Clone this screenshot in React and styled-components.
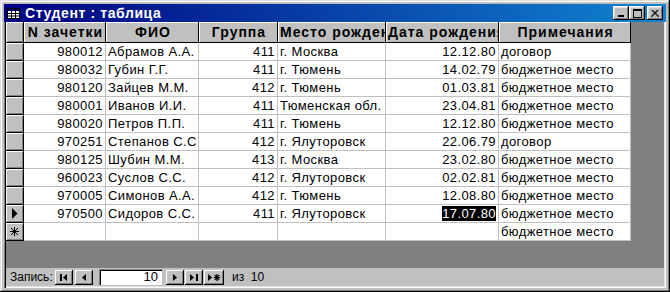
import styled, { createGlobalStyle } from 'styled-components'

const GlobalStyle = createGlobalStyle`
  html, body {
    margin: 0;
    padding: 0;
    background: #c0c0c0;
  }
  * {
    box-sizing: border-box;
  }
`

const columns = [
  { key: 'num', title: 'N зачетки', width: 82, align: 'right' },
  { key: 'fio', title: 'ФИО', width: 93, align: 'left' },
  { key: 'group', title: 'Группа', width: 79, align: 'right' },
  { key: 'place', title: 'Место рожден', width: 108, align: 'left' },
  { key: 'date', title: 'Дата рождения', width: 113, align: 'right' },
  { key: 'note', title: 'Примечания', width: 132, align: 'left' },
]

const rows = [
  ['980012', 'Абрамов А.А.', '411', 'г. Москва', '12.12.80', 'договор'],
  ['980032', 'Губин Г.Г.', '411', 'г. Тюмень', '14.02.79', 'бюджетное место'],
  ['980120', 'Зайцев М.М.', '412', 'г. Тюмень', '01.03.81', 'бюджетное место'],
  ['980001', 'Иванов И.И.', '411', 'Тюменская обл.', '23.04.81', 'бюджетное место'],
  ['980020', 'Петров П.П.', '411', 'г. Тюмень', '12.12.80', 'бюджетное место'],
  ['970251', 'Степанов С.С', '412', 'г. Ялуторовск', '22.06.79', 'договор'],
  ['980125', 'Шубин М.М.', '413', 'г. Москва', '23.02.80', 'бюджетное место'],
  ['960023', 'Суслов С.С.', '412', 'г. Ялуторовск', '02.02.81', 'бюджетное место'],
  ['970005', 'Симонов А.А.', '412', 'г. Тюмень', '12.08.80', 'бюджетное место'],
  ['970500', 'Сидоров С.С.', '411', 'г. Ялуторовск', '17.07.80', 'бюджетное место'],
]

const Window = styled.div`
  width: 670px;
  height: 292px;
  padding: 4px;
  display: flex;
  flex-direction: column;
  background: #c0c0c0;
  box-shadow: inset -1px -1px #000, inset 1px 1px #dfdfdf,
    inset -2px -2px #808080, inset 2px 2px #fff;
  font-family: 'Liberation Sans', Arial, sans-serif;
  font-size: 13px;
  color: #000;
`

const TitleBar = styled.div`
  height: 18px;
  display: flex;
  align-items: center;
  padding: 0 3px 0 3px;
  background: linear-gradient(to right, #000080, #1084d0);
  color: #fff;
  font-weight: bold;
  font-size: 14px;
  letter-spacing: 0.6px;
`

const TitleIcon = styled.svg`
  flex: none;
  margin-right: 5px;
`

const TitleText = styled.span`
  flex: 1;
  white-space: nowrap;
`

const CaptionButton = styled.button`
  width: 16px;
  height: 14px;
  padding: 0;
  margin-left: ${({ $gap }) => $gap || 0}px;
  border: none;
  background: #c0c0c0;
  box-shadow: inset -1px -1px #000, inset 1px 1px #fff,
    inset -2px -2px #808080, inset 2px 2px #dfdfdf;
  display: flex;
  align-items: center;
  justify-content: center;
`

const Client = styled.div`
  flex: 1;
  display: flex;
  flex-direction: column;
  padding: 0 2px 2px 2px;
  box-shadow: inset 1px 0 #808080, inset 2px 0 #000, inset -1px -1px #fff,
    inset -2px -2px #dfdfdf;
`

const Workspace = styled.div`
  flex: 1;
  background: #808080;
  overflow: hidden;
`

const Grid = styled.div`
  display: grid;
  grid-template-columns: 18px ${columns.map((c) => `${c.width}px`).join(' ')};
  grid-auto-rows: 18px;
  grid-template-rows: 21px;
  width: max-content;
  background: #fff;
`

const HeaderCell = styled.div`
  background: #c0c0c0;
  border-right: 1px solid #000;
  border-bottom: 1px solid #000;
  box-shadow: inset 1px 1px #fff;
  font-weight: bold;
  font-size: 14px;
  letter-spacing: 1px;
  text-align: center;
  line-height: 20px;
  white-space: nowrap;
  overflow: hidden;
  padding-left: 2px;
`

const Selector = styled.div`
  background: #c0c0c0;
  border-right: 1px solid #000;
  border-bottom: 1px solid #000;
  box-shadow: inset 1px 1px #fff, inset -1px -1px #808080;
  display: flex;
  align-items: center;
  justify-content: center;
`

const Cell = styled.div`
  border-right: 1px solid #c0c0c0;
  border-bottom: 1px solid #c0c0c0;
  text-align: ${({ $align }) => $align};
  padding: 0 2px 0 2px;
  line-height: 17px;
  white-space: nowrap;
  overflow: hidden;
  letter-spacing: 0.4px;
`

const Selected = styled.span`
  background: #000;
  color: #fff;
`

const StatusBar = styled.div`
  height: 18px;
  display: flex;
  align-items: center;
  padding-left: 4px;
  background: #c0c0c0;
  font-size: 12px;
`

const StatusLabel = styled.span`
  width: ${({ $w }) => ($w ? `${$w}px` : 'auto')};
  flex: none;
  margin-left: ${({ $gap }) => $gap || 0}px;
  white-space: pre;
`

const NavButton = styled.button`
  width: ${({ $w }) => $w || 18}px;
  height: 15px;
  padding: 0;
  margin-left: ${({ $gap }) => $gap || 0}px;
  border: none;
  background: #c0c0c0;
  box-shadow: inset -1px -1px #000, inset 1px 1px #fff,
    inset -2px -2px #808080;
  display: flex;
  align-items: center;
  justify-content: center;
`

const RecordBox = styled.div`
  width: 63px;
  height: 16px;
  margin: 0 4px 0 6px;
  background: #fff;
  box-shadow: inset 1px 1px #808080, inset 2px 2px #000, inset -1px -1px #fff;
  text-align: right;
  padding-right: 4px;
  line-height: 16px;
  font-size: 13px;
`

const First = () => (
  <svg width="8" height="7" viewBox="0 0 8 7">
    <rect x="0" y="0" width="2" height="7" fill="#000" />
    <path d="M7 0 L3 3.5 L7 7 Z" fill="#000" />
  </svg>
)

const Prev = () => (
  <svg width="5" height="7" viewBox="0 0 5 7">
    <path d="M4 0 L0 3.5 L4 7 Z" fill="#000" />
  </svg>
)

const Next = () => (
  <svg width="5" height="7" viewBox="0 0 5 7">
    <path d="M0 0 L4 3.5 L0 7 Z" fill="#000" />
  </svg>
)

const Last = () => (
  <svg width="8" height="7" viewBox="0 0 8 7">
    <path d="M0 0 L4 3.5 L0 7 Z" fill="#000" />
    <rect x="6" y="0" width="2" height="7" fill="#000" />
  </svg>
)

const NewRec = () => (
  <svg width="13" height="7" viewBox="0 0 13 7">
    <path d="M0 0 L4 3.5 L0 7 Z" fill="#000" />
    <path d="M9 0 V7 M5.8 3.5 H12.2 M6.8 1.2 L11.2 5.8 M11.2 1.2 L6.8 5.8" stroke="#000" strokeWidth="1.2" />
  </svg>
)

const Star = () => (
  <svg width="9" height="9" viewBox="0 0 9 9">
    <path d="M4.5 0 V9 M0 4.5 H9 M1 1 L8 8 M8 1 L1 8" stroke="#000" strokeWidth="1" />
  </svg>
)

const Current = () => (
  <svg width="7" height="11" viewBox="0 0 7 11">
    <path d="M1 0 L6.5 5.5 L1 11 Z" fill="#000" />
  </svg>
)

export default function App() {
  return (
    <>
      <GlobalStyle />
      <Window>
        <TitleBar>
          <TitleIcon width="13" height="11" viewBox="0 0 13 11">
            <rect x="0.5" y="0.5" width="12" height="10" fill="#fff" stroke="#000" />
            <rect x="1" y="1" width="11" height="2" fill="#000080" />
            <path d="M0.5 5.5 H12.5 M0.5 8 H12.5 M4.5 0.5 V10.5 M8.5 0.5 V10.5" stroke="#000" />
          </TitleIcon>
          <TitleText>Студент : таблица</TitleText>
          <CaptionButton>
            <svg width="8" height="8" viewBox="0 0 8 8">
              <rect x="1" y="6" width="6" height="2" fill="#000" />
            </svg>
          </CaptionButton>
          <CaptionButton>
            <svg width="9" height="9" viewBox="0 0 9 9">
              <rect x="0.5" y="0.5" width="8" height="8" fill="none" stroke="#000" />
              <rect x="0" y="0" width="9" height="2" fill="#000" />
            </svg>
          </CaptionButton>
          <CaptionButton $gap={2}>
            <svg width="8" height="7" viewBox="0 0 8 7">
              <path d="M0.5 0 L7.5 7 M7.5 0 L0.5 7 M1.5 0 L8.5 7 M6.5 0 L-0.5 7" stroke="#000" strokeWidth="1" />
            </svg>
          </CaptionButton>
        </TitleBar>
        <Client>
          <Workspace>
            <Grid>
              <Selector />
              {columns.map((c) => (
                <HeaderCell key={c.key}>{c.title}</HeaderCell>
              ))}
              {rows.map((r, i) => (
                <Row key={r[0]} data={r} current={i === rows.length - 1} />
              ))}
              <Selector>
                <Star />
              </Selector>
              {columns.map((c) => (
                <Cell key={c.key} $align={c.align}>
                  {c.key === 'note' ? 'бюджетное место' : ''}
                </Cell>
              ))}
            </Grid>
          </Workspace>
          <StatusBar>
            <StatusLabel $w={45}>Запись:</StatusLabel>
            <NavButton>
              <First />
            </NavButton>
            <NavButton $gap={2}>
              <Prev />
            </NavButton>
            <RecordBox>10</RecordBox>
            <NavButton>
              <Next />
            </NavButton>
            <NavButton $gap={1}>
              <Last />
            </NavButton>
            <NavButton $w={20} $gap={1}>
              <NewRec />
            </NavButton>
            <StatusLabel $gap={8}>из  10</StatusLabel>
          </StatusBar>
        </Client>
      </Window>
    </>
  )
}

function Row({ data, current }) {
  return (
    <>
      <Selector>{current && <Current />}</Selector>
      {columns.map((c, j) => (
        <Cell key={c.key} $align={c.align}>
          {current && c.key === 'date' ? <Selected>{data[j]}</Selected> : data[j]}
        </Cell>
      ))}
    </>
  )
}
